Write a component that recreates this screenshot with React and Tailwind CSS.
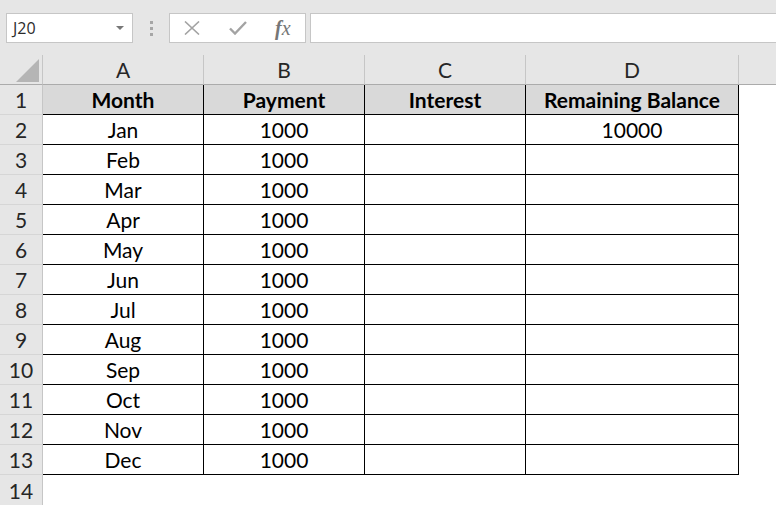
import React from 'react';

const months = ['Jan', 'Feb', 'Mar', 'Apr', 'May', 'Jun', 'Jul', 'Aug', 'Sep', 'Oct', 'Nov', 'Dec'];
const cols = ['A', 'B', 'C', 'D'];

const font = { fontFamily: 'Lato, "Open Sans", sans-serif' };

const FormulaBar = () => (
  <div className="flex h-[55px] items-start bg-[#e6e6e6] pt-[13px]" style={{ fontFamily: '"Open Sans", "Noto Sans", sans-serif' }}>
    {/* name box */}
    <div className="ml-[6px] flex h-[30px] w-[127px] items-center justify-between border border-[#c6c6c6] bg-white pl-[6px] pr-[8px]">
      <span className="text-[16px] text-[#2b2b2b]">J20</span>
      <svg width="8" height="5" viewBox="0 0 8 5">
        <path d="M0 0h8L4 4z" fill="#777" />
      </svg>
    </div>
    {/* grip dots */}
    <div className="ml-[17px] mt-[8px] flex flex-col gap-[3px]">
      <span className="block h-[3px] w-[3px] bg-[#a6a6a6]" />
      <span className="block h-[3px] w-[3px] bg-[#a6a6a6]" />
      <span className="block h-[3px] w-[3px] bg-[#a6a6a6]" />
    </div>
    {/* cancel / enter / fx */}
    <div className="ml-[16px] flex h-[30px] w-[137px] items-center border border-[#c6c6c6] bg-white">
      <svg className="ml-[14px]" width="16" height="14" viewBox="0 0 16 14">
        <path d="M1 0.5l14 13M15 0.5l-14 13" stroke="#a3a3a3" strokeWidth="1.6" fill="none" />
      </svg>
      <svg className="ml-[29px]" width="18" height="14" viewBox="0 0 18 14">
        <path d="M1 7.5l5 5L17 1" stroke="#a3a3a3" strokeWidth="2.4" fill="none" />
      </svg>
      <span className="ml-[28px] text-[20px] italic leading-none text-[#767676]" style={{ fontFamily: '"Liberation Serif", serif' }}>
        <span className="font-bold">f</span>x
      </span>
    </div>
    <div className="ml-[4px] h-[30px] flex-1 border border-r-0 border-[#c6c6c6] bg-white" />
  </div>
);

export default function App() {
  return (
    <div className="h-[505px] w-[776px] overflow-hidden bg-white" style={font}>
      <FormulaBar />
      <div className="grid grid-cols-[43px_161px_161px_161px_213px_1fr] auto-rows-[30px] text-[21px] text-black">
        {/* column headers */}
        <div className="flex items-end justify-end border-b border-r border-[#ababab] border-r-[#c6c6c6] bg-[#e6e6e6] pb-[2px] pr-[3px]">
          <svg width="23" height="23" viewBox="0 0 23 23">
            <path d="M23 0V23H0z" fill="#b5b5b5" />
          </svg>
        </div>
        {cols.map((c) => (
          <div key={c} className="flex items-center justify-center border-b border-r border-[#ababab] border-r-[#c6c6c6] bg-[#e6e6e6] pt-[1px] text-[#262626]">
            {c}
          </div>
        ))}
        <div className="border-b border-[#ababab] bg-[#e6e6e6]" />

        {/* row 1 */}
        <div className="flex items-center justify-center border-b border-r border-[#d6d6d6] border-r-[#c6c6c6] bg-[#e6e6e6] pt-[1px] text-[#262626]">1</div>
        {['Month', 'Payment', 'Interest', 'Remaining Balance'].map((h) => (
          <div key={h} className="flex items-center justify-center border-b border-r border-black bg-[#d9d9d9] pt-[1px] font-bold">
            {h}
          </div>
        ))}
        <div />

        {months.map((m, i) => (
          <React.Fragment key={m}>
            <div className="flex items-center justify-center border-b border-r border-[#d6d6d6] border-r-[#c6c6c6] bg-[#e6e6e6] pt-[1px] text-[#262626]">
              {i + 2}
            </div>
            <div className="flex items-center justify-center border-b border-r border-black pt-[1px]">{m}</div>
            <div className="flex items-center justify-center border-b border-r border-black pt-[1px]">1000</div>
            <div className="border-b border-r border-black" />
            <div className="flex items-center justify-center border-b border-r border-black pt-[1px]">{i === 0 ? '10000' : ''}</div>
            <div />
          </React.Fragment>
        ))}

        {/* row 14 */}
        <div className="flex items-center justify-center border-r border-[#c6c6c6] bg-[#e6e6e6] pt-[1px] text-[#262626]">14</div>
        <div />
        <div />
        <div />
        <div />
        <div />
      </div>
    </div>
  );
}
